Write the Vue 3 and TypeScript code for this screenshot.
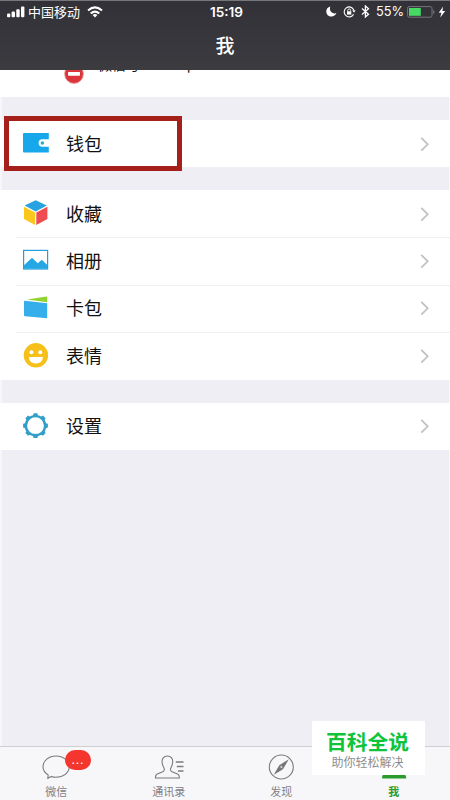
<script setup lang="ts">
interface Item {
  id: string
  label: string
}

const groups: Item[][] = [
  [{ id: 'wallet', label: '钱包' }],
  [
    { id: 'favorites', label: '收藏' },
    { id: 'album', label: '相册' },
    { id: 'cards', label: '卡包' },
    { id: 'stickers', label: '表情' },
  ],
  [{ id: 'settings', label: '设置' }],
]

const tabs: Item[] = [
  { id: 'chats', label: '微信' },
  { id: 'contacts', label: '通讯录' },
  { id: 'discover', label: '发现' },
  { id: 'me', label: '我' },
]

const teeth: number[] = [0, 45, 90, 135, 180, 225, 270, 315]
</script>

<template>
  <div class="screen">
    <header class="header">
      <div class="status">
        <div class="status-left">
          <svg class="signal" width="18" height="12" viewBox="0 0 18 12" fill="#fff">
            <rect x="0" y="7.4" width="3.3" height="3.8" rx="1" />
            <rect x="4.6" y="5.4" width="3.4" height="5.8" rx="1" />
            <rect x="9.3" y="3.2" width="3.4" height="8" rx="1" />
            <rect x="14" y="0.6" width="3.4" height="10.6" rx="1" />
          </svg>
          <span class="carrier">中国移动</span>
          <svg class="wifi" width="16" height="12" viewBox="0 0 16 12" fill="none" stroke="#fff" stroke-width="2">
            <path d="M1 4.4Q8-1.6 15 4.4" />
            <path d="M3.7 7.4Q8 3.8 12.3 7.4" />
            <path d="M5.6 9Q8 7.2 10.4 9L8 11.6Z" fill="#fff" stroke="none" />
          </svg>
        </div>
        <span class="clock">15:19</span>
        <div class="status-right">
          <svg width="11" height="11" viewBox="0 0 11 11">
            <path d="M4.3.6C1.8 1.2.3 3.2.3 5.5C.3 8.4 2.6 10.6 5.4 10.6C7.7 10.6 9.7 9.2 10.4 7.1C7 8.5 2.6 5.6 4.3.6Z" fill="#fff" />
          </svg>
          <svg class="lock" width="13" height="12" viewBox="0 0 13 12" fill="none" stroke="#fff">
            <path d="M10.8 4A5 5 0 1 0 10.6 8.3" stroke-width="1.1" />
            <path d="M9.2 4.2H12.6L11 6.7Z" fill="#fff" stroke="none" />
            <rect x="4" y="5.3" width="4.3" height="3.3" fill="#fff" stroke="none" />
            <path d="M4.8 5.5V4.3a1.4 1.4 0 0 1 2.8 0V5.5" stroke-width=".9" />
          </svg>
          <svg class="bluetooth" width="9" height="13" viewBox="0 0 9 13" fill="none" stroke="#fff" stroke-width="1.3">
            <path d="M1 3.6L7.5 9.2L4.4 12V1L7.5 3.8L1 9.4" />
          </svg>
          <span class="percent">55%</span>
          <svg class="battery" width="28" height="12" viewBox="0 0 28 12">
            <rect x=".6" y=".6" width="24.4" height="10.6" rx="1.6" fill="none" stroke="#77767b" />
            <rect x="2" y="2" width="11.8" height="7.8" fill="#46d963" />
            <path d="M26.2 4v4q1.4-.5 1.4-2t-1.4-2Z" fill="#77767b" />
          </svg>
          <svg class="bolt" width="8" height="12" viewBox="0 0 8 12">
            <path d="M5.2.5L.7 6.7H3.4L2.2 11.5L7.2 4.9H4.3Z" fill="#fff" />
          </svg>
        </div>
      </div>
      <h1 class="title">我</h1>
    </header>

    <main class="content">
      <section class="profile">
        <svg class="stop" width="22" height="22" viewBox="0 0 22 22">
          <circle cx="11" cy="11" r="9.4" fill="#dc343b" stroke="#eaa09e" stroke-width=".8" />
          <rect x="5" y="8.9" width="12" height="3.8" rx=".6" fill="#fff" />
        </svg>
        <span class="account">微信号</span>
        <span class="account-id">pwx</span>
      </section>

      <section
        v-for="(group, index) in groups"
        :key="index"
        class="group"
        :class="{ highlighted: index === 0 }"
      >
        <div v-for="item in group" :key="item.id" class="row">
          <svg class="icon" width="28" height="28" viewBox="0 0 28 28">
            <template v-if="item.id === 'wallet'">
              <path d="M2 4H26.8V10.2H20.4A3.8 3.8 0 0 0 20.4 17.8H26.8V23.6H2Q1 23.6 1 22.6V5Q1 4 2 4Z" fill="#17a8ec" />
              <circle cx="20.4" cy="14" r="1.8" fill="#36a9ca" />
            </template>
            <template v-else-if="item.id === 'favorites'">
              <path d="M13.7 1.3L24.8 6.6L13.7 12.5L2.6 6.6Z" fill="#27a3e1" />
              <path d="M2 7.8L13.1 13.6V26L2 20.1Z" fill="#fac81c" />
              <path d="M25.4 7.8L14.3 13.6V26L25.4 20.1Z" fill="#ef4c51" />
            </template>
            <template v-else-if="item.id === 'album'">
              <rect x="1.6" y="4.4" width="24" height="18.6" fill="#fff" stroke="#249fdb" stroke-width="1.2" />
              <path d="M2 19.3L10 11.7L15.8 17.3L19.8 13.8L25.3 19V22.8H2Z" fill="#25a7e6" />
            </template>
            <template v-else-if="item.id === 'cards'">
              <path d="M5 5.4L24.6 2.5Q25.2 2.5 25.2 3.1V8.2Z" fill="#91d22f" />
              <path d="M2.9 6.7L25.2 9.3V24.2L3 22.2Q2 22 2 21.2V7.5Q2 6.6 2.9 6.7Z" fill="#35aeeb" />
            </template>
            <template v-else-if="item.id === 'stickers'">
              <circle cx="13.9" cy="14.3" r="12.2" fill="#f6c01a" />
              <circle cx="9.4" cy="11.2" r="2" fill="#fff" />
              <circle cx="18.3" cy="11.2" r="2" fill="#fff" />
              <path d="M6.8 16H21Q20.4 22.5 13.9 22.5T6.8 16Z" fill="#fff" />
            </template>
            <template v-else>
              <circle cx="13.5" cy="13.7" r="9.6" fill="none" stroke="#319fc8" stroke-width="2.4" />
              <path
                v-for="angle in teeth"
                :key="angle"
                d="M10.8 4.5L11.6 1.3H15.4L16.2 4.5Z"
                :transform="`rotate(${angle} 13.5 13.7)`"
                fill="#319fc8"
              />
            </template>
          </svg>
          <span class="label">{{ item.label }}</span>
          <svg class="chevron" width="10" height="16" viewBox="0 0 10 16">
            <path d="M1.3 1.9L7.7 8.3L1.3 14.7" fill="none" stroke="#c2c2c4" stroke-width="1.8" />
          </svg>
        </div>
      </section>
    </main>

    <nav class="tabs">
      <div v-for="tab in tabs" :key="tab.id" class="tab" :class="{ active: tab.id === 'me' }">
        <div class="tab-icon">
          <svg width="32" height="28" viewBox="0 0 32 28" fill="none" stroke="#7b7b80" stroke-width="1.1">
            <path
              v-if="tab.id === 'chats'"
              d="M8.2 21.9C4.9 20 3 17.2 3 13.8C3 7.6 8.8 3 16 3S29.2 7.6 29.2 13.8S23.2 24.2 16 24.2Q13.5 24.2 11.4 23.4L7.8 25.3Z"
            />
            <template v-else-if="tab.id === 'contacts'">
              <path
                d="M14.4 3C18.2 3 20 5.8 19.7 9.4C19.5 12 18.4 13.8 17.7 15.2Q17 17.5 18.5 18.5L25 21.3Q26.4 22.1 26.4 25H2.4Q2.4 22.1 3.8 21.3L10.3 18.5Q11.8 17.5 11.1 15.2C10.4 13.8 9.3 12 9.1 9.4C8.8 5.8 10.6 3 14.4 3Z"
              />
              <path d="M22.8 9H30.5M23.8 13.5H30.5M25 18H30.5" stroke-width="1.3" />
            </template>
            <template v-else-if="tab.id === 'discover'">
              <circle cx="16.3" cy="14" r="12" />
              <path d="M23.8 6.3L17.9 16.2L8.8 21.8L14.3 12.2Z" fill="#737378" stroke="none" />
              <circle cx="16.3" cy="14" r="1.2" fill="#f7f7f9" stroke="#737378" stroke-width=".6" />
            </template>
            <template v-else>
              <circle cx="16" cy="9" r="6" fill="#2b9b2d" stroke="none" />
              <path d="M4 25.5Q4 20.5 8 19L16 15L24 19Q28 20.5 28.3 25.5Z" fill="#2b9b2d" stroke="none" />
            </template>
          </svg>
          <span v-if="tab.id === 'chats'" class="badge">...</span>
        </div>
        <span class="tab-label">{{ tab.label }}</span>
      </div>
    </nav>

    <aside class="watermark">
      <strong>百科全说</strong>
      <span>助你轻松解决</span>
    </aside>
  </div>
</template>

<style>
body {
  margin: 0;
}
</style>

<style scoped>
.screen {
  position: relative;
  display: flex;
  flex-direction: column;
  width: 450px;
  height: 800px;
  overflow: hidden;
  background: #efeef4;
  font-family: Inter, "Noto Sans CJK SC", sans-serif;
  color: #111;
}
svg {
  display: block;
  flex: none;
}
.header {
  flex: none;
  height: 70px;
  box-sizing: border-box;
  border-top: 1px solid #77777b;
  background: linear-gradient(#323137, #3c3b40);
  color: #fff;
}
.status {
  display: grid;
  grid-template-columns: 1fr auto 1fr;
  align-items: center;
  height: 21px;
  padding: 0 5px 0 7px;
}
.status-left,
.status-right {
  display: flex;
  align-items: center;
}
.status-right {
  justify-content: flex-end;
}
.carrier {
  margin: 0 7px 0 3px;
  font-size: 13px;
  line-height: 20px;
}
.clock {
  padding-left: 1px;
  font-size: 13.6px;
  font-weight: 600;
  line-height: 20px;
}
.lock {
  margin-left: 6px;
}
.bluetooth {
  margin-left: 5px;
}
.percent {
  margin: 0 3px 0 6px;
  font-size: 12.8px;
}
.bolt {
  margin: 0 -1px 0 3px;
}
.title {
  margin: 10px 0 0;
  font-size: 19px;
  font-weight: 500;
  line-height: 30px;
  text-align: center;
}
.content {
  flex: 1;
  min-height: 0;
  border-left: 2px solid #f7f7fa;
  border-right: 1px solid #f7f7fa;
}
.profile {
  display: flex;
  align-items: flex-start;
  height: 27px;
  margin: 0 -1px 23px -2px;
  overflow: hidden;
  background: #fff;
}
.stop {
  margin: -7px 0 0 63px;
}
.account,
.account-id {
  margin-top: -15px;
  font-size: 14px;
  line-height: 20px;
}
.account {
  width: 89px;
  margin-left: 13px;
}
.group {
  margin: 0 -1px 23px -2px;
  background: #fff;
}
.highlighted {
  position: relative;
}
.highlighted::before {
  position: absolute;
  top: -4px;
  left: 4px;
  width: 168px;
  height: 45px;
  border: 5px solid #a51f1b;
  content: "";
}
.row {
  position: relative;
  display: flex;
  align-items: center;
  height: 47px;
  padding: 0 20px 0 22px;
}
.row + .row {
  height: 47.6px;
}
.row + .row::before {
  position: absolute;
  top: 0;
  right: 0;
  left: 16px;
  height: 1px;
  background: #f1f1f3;
  content: "";
}
.icon {
  margin-bottom: 1px;
}
.label {
  flex: 1;
  margin-left: 16px;
  padding-top: 2px;
  font-size: 18px;
  line-height: 26px;
}
.tabs {
  display: grid;
  flex: none;
  grid-template-columns: repeat(4, 112.5px);
  height: 54px;
  box-sizing: border-box;
  border-top: 1px solid #cfcfd3;
  background: #f7f7f9;
}
.tab {
  display: flex;
  flex-direction: column;
  align-items: center;
  padding-top: 6px;
}
.tab-icon {
  position: relative;
}
.tab-label {
  font-size: 11px;
  line-height: 16px;
  margin-top: 3px;
  color: #818186;
}
.active .tab-label {
  color: #2b9b2d;
  font-weight: 600;
}
.badge {
  position: absolute;
  top: -3px;
  left: 24.7px;
  width: 26px;
  height: 20px;
  border-radius: 10px;
  background: #f5362e;
  color: #fff;
  font-size: 12px;
  line-height: 20px;
  letter-spacing: 0.8px;
  text-align: center;
}
.watermark {
  position: absolute;
  top: 721px;
  left: 312px;
  display: flex;
  flex-direction: column;
  align-items: center;
  width: 113px;
  height: 54px;
  padding: 9px 2px 0 0;
  box-sizing: border-box;
  background: #fff;
}
.watermark strong {
  font-size: 20.8px;
  font-weight: 700;
  line-height: 26px;
  color: #0fc43b;
}
.watermark span {
  font-size: 12px;
  line-height: 14px;
  color: #8d8d8d;
}
</style>
